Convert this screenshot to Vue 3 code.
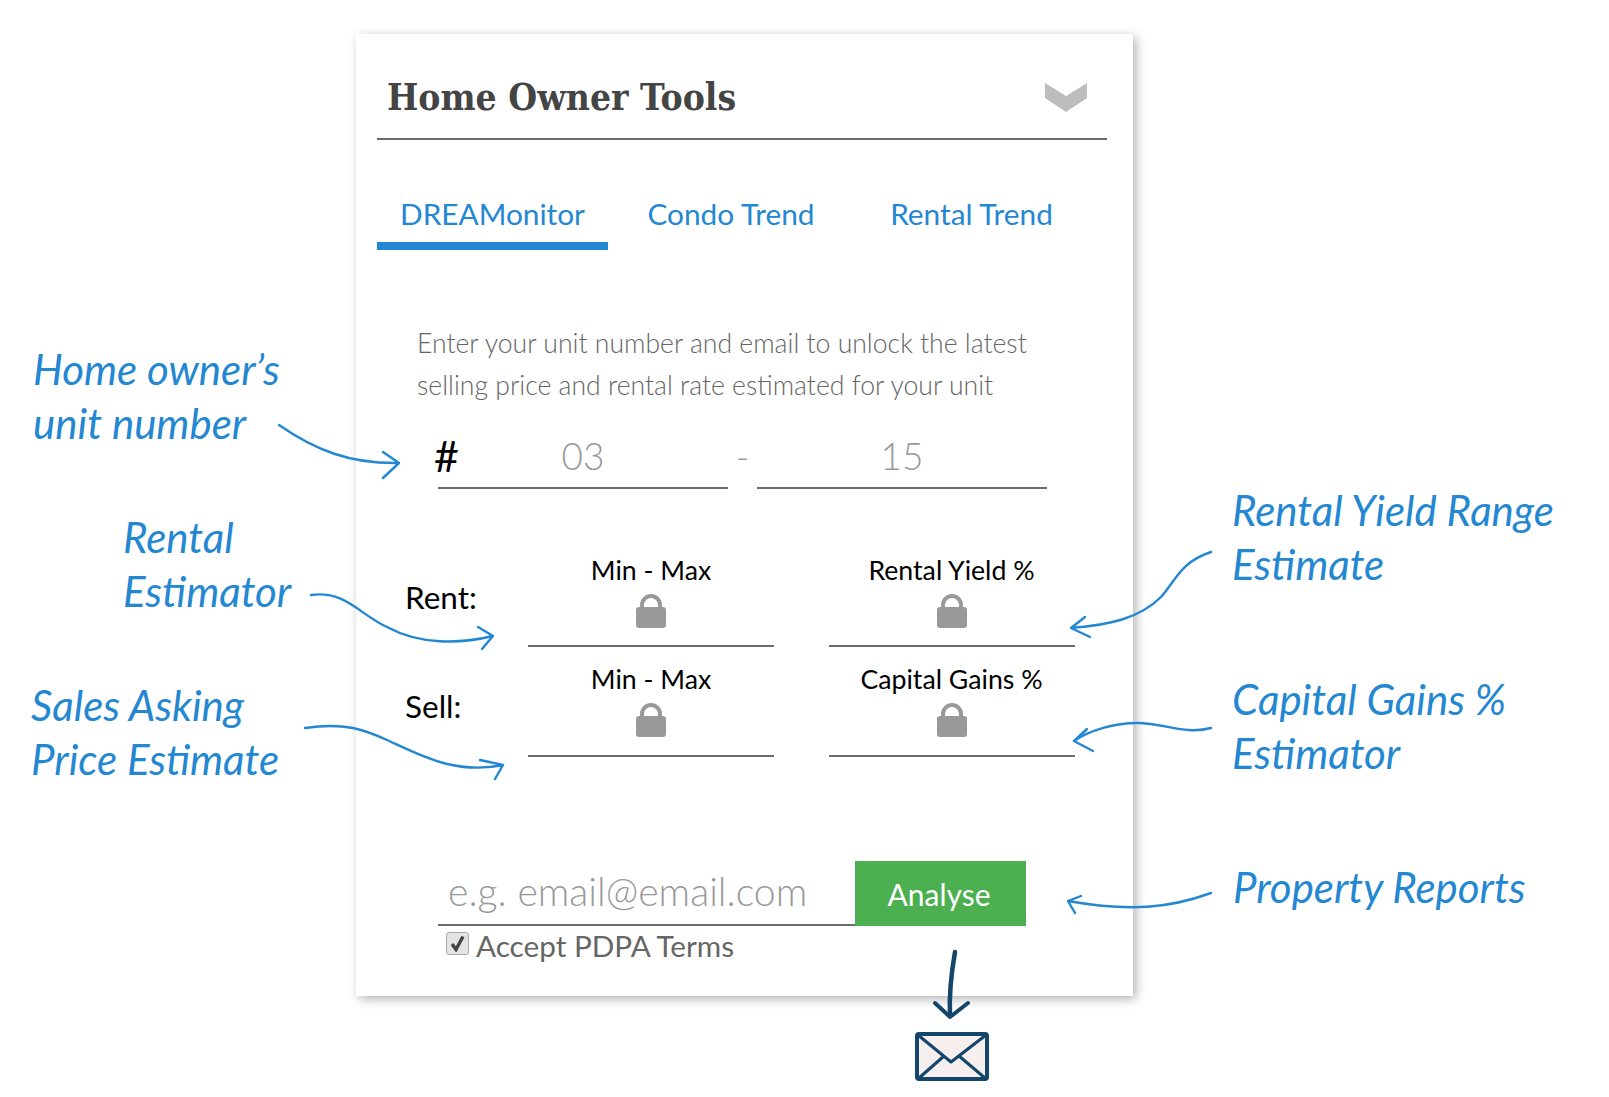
<template>
  <div class="canvas">
    <div class="card">
      <div class="card-header">
        <h2 class="title">Home Owner Tools</h2>
        <svg class="chevron" width="42" height="29" viewBox="0 0 42 29">
          <polygon points="0,0 21,13 42,0 42,15 21,29 0,15" fill="#bdbdbd" />
        </svg>
      </div>

      <div class="tabs">
        <div v-for="(tab, i) in tabs" :key="tab" class="tab" :class="{ active: i === 0 }">{{ tab }}</div>
      </div>

      <p class="intro">
        Enter your unit number and email to unlock the latest<br />
        selling price and rental rate estimated for your unit
      </p>

      <div class="unit-row">
        <div class="unit-field"><span class="hash">#</span>03</div>
        <div class="unit-sep">-</div>
        <div class="unit-field">15</div>
      </div>

      <div class="estimates">
        <template v-for="row in rows" :key="row.label">
          <div class="row-label" :class="row.cls">{{ row.label }}</div>
          <div v-for="col in row.cols" :key="col" class="estimate" :class="row.cls">
            <div class="estimate-name">{{ col }}</div>
            <svg class="lock" width="30" height="34" viewBox="0 0 30 34">
              <path d="M6 15V11a9 9 0 0 1 18 0v4" fill="none" stroke="#999" stroke-width="4" />
              <rect x="0" y="13" width="30" height="21" rx="3" fill="#999" />
            </svg>
          </div>
        </template>
      </div>

      <div class="email-row">
        <div class="email-input">e.g. email@email.com</div>
        <button class="analyse">Analyse</button>
      </div>
      <label class="terms">
        <span class="checkbox">
          <svg width="17" height="17" viewBox="0 0 17 17">
            <path d="M3 9l4 5.5L14 1.5" fill="none" stroke="#444" stroke-width="3.4" />
          </svg>
        </span>
        Accept PDPA Terms
      </label>
    </div>

    <!-- callouts around the card -->
    <div class="note note-unit">Home owner’s<br />unit number</div>
    <div class="note note-rental">Rental<br />Estimator</div>
    <div class="note note-sales">Sales Asking<br />Price Estimate</div>
    <div class="note note-yield">Rental Yield Range<br />Estimate</div>
    <div class="note note-gains">Capital Gains %<br />Estimator</div>
    <div class="note note-reports">Property Reports</div>

    <svg class="arrows" width="1609" height="1097" viewBox="0 0 1609 1097">
      <path v-for="d in arrows" :key="d" :d="d" fill="none" stroke="#2387d1" stroke-width="2.4" stroke-linecap="round" stroke-linejoin="round" />
      <g fill="none" stroke="#14456a" stroke-linecap="round" stroke-linejoin="round">
        <path d="M955 952C951 975 949 995 950 1015" stroke-width="4.5" />
        <path d="M935 1003L950 1017L968 1003" stroke-width="4" />
        <rect x="917" y="1034" width="70" height="45" rx="2" fill="#f7eeee" stroke-width="4" />
        <path d="M918 1035L951 1062L986 1035M919 1078L944 1056M985 1078L959 1056" stroke-width="3" />
      </g>
    </svg>
  </div>
</template>

<script setup>
const tabs = ["DREAMonitor", "Condo Trend", "Rental Trend"];

const rows = [
  { label: "Rent:", cls: "rent", cols: ["Min - Max", "Rental Yield %"] },
  { label: "Sell:", cls: "sell", cols: ["Min - Max", "Capital Gains %"] },
];

const arrows = [
  "M279 425C315 450 350 464 399 463M383 452L399 463L383 478",
  "M311 595C345 590 360 615 387 627C420 645 460 644 493 636M478 627L493 636L482 649",
  "M305 728C345 722 365 730 387 740C420 755 455 775 503 765M480 760L503 765L495 779",
  "M1211 552C1180 562 1175 582 1161 597C1140 618 1110 625 1071 628M1085 617L1071 628L1090 637",
  "M1211 728C1185 735 1165 723 1137 723C1115 723 1090 730 1074 741M1087 729L1074 741L1093 751",
  "M1211 893C1170 908 1130 912 1068 901M1081 896L1068 901L1075 913",
];
</script>

<style>
html,
body {
  background: #fff;
}
</style>

<style scoped>
.canvas {
  position: relative;
  width: 1609px;
  height: 1097px;
  overflow: hidden;
  padding-top: 34px;
  box-sizing: border-box;
  font-family: Lato, sans-serif;
}

.card {
  margin-left: 356px;
  width: 777px;
  height: 962px;
  box-sizing: border-box;
  padding: 0 26px 0 21px;
  background: #fff;
  box-shadow: 3px 3px 10px rgba(0, 0, 0, 0.3);
}

.card-header {
  height: 106px;
  box-sizing: border-box;
  border-bottom: 2px solid #6b6b6b;
  display: flex;
  align-items: center;
  justify-content: space-between;
  padding: 6px 20px 0 10px;
}

.title {
  margin: 16px 0 0;
  font-family: "DejaVu Serif Condensed", "DejaVu Serif", serif;
  font-stretch: condensed;
  font-weight: 700;
  font-size: 36.9px;
  color: #444;
}

.chevron {
  margin-top: 16px;
}

.tabs {
  display: grid;
  grid-template-columns: 231px 246px 235px;
  margin-top: 54px;
}

.tab {
  height: 56px;
  line-height: 40px;
  text-align: center;
  font-size: 29.8px;
  color: #2387d1;
  box-sizing: border-box;
}

.tab.active {
  border-bottom: 8px solid #2387d1;
}

.intro {
  margin: 72px 0 0 40px;
  font-weight: 300;
  font-size: 26.6px;
  line-height: 42px;
  color: #666;
  white-space: nowrap;
}

.unit-row {
  display: flex;
  margin: 24px 0 0 61px;
}

.unit-field {
  position: relative;
  width: 290px;
  height: 59px;
  line-height: 52px;
  box-sizing: border-box;
  border-bottom: 2px solid #6b6b6b;
  text-align: center;
  font-weight: 300;
  font-size: 37px;
  color: #999;
}

.hash {
  position: absolute;
  left: -4px;
  top: 0;
  font-weight: 400;
  font-size: 43px;
  color: #000;
}

.unit-sep {
  width: 29px;
  line-height: 52px;
  text-align: center;
  font-weight: 300;
  font-size: 37px;
  color: #999;
}

.estimates {
  display: grid;
  grid-template-columns: 66.5px 246px 246px;
  column-gap: 54.5px;
  row-gap: 14px;
  margin: 63px 0 0 28px;
  padding-left: 2px;
}

.row-label {
  padding-top: 27px;
  margin-left: -2px;
  font-size: 31.5px;
  line-height: 36px;
  color: #000;
}

.estimate {
  display: flex;
  flex-direction: column;
  align-items: center;
  padding-bottom: 17px;
  border-bottom: 2px solid #6b6b6b;
}

.estimate.sell {
  padding-bottom: 18px;
}

.estimate-name {
  font-size: 26.7px;
  line-height: 36px;
  color: #000;
  margin-bottom: 6px;
}

.lock {
  display: block;
}

.email-row {
  display: flex;
  margin: 104px 0 0 61px;
}

.email-input {
  width: 417px;
  height: 65px;
  box-sizing: border-box;
  padding-left: 10px;
  border-bottom: 2px solid #6b6b6b;
  line-height: 60px;
  font-weight: 300;
  font-size: 39.2px;
  color: #999;
}

.analyse {
  width: 171px;
  height: 65px;
  border: none;
  background: #4caf50;
  color: #fff;
  font-family: Lato, sans-serif;
  font-size: 30px;
  padding: 0 3px 0 0;
}

.terms {
  display: flex;
  align-items: center;
  gap: 7px;
  margin: 5px 0 0 69px;
  font-size: 29.7px;
  line-height: 30px;
  color: #666;
}

.checkbox {
  width: 23px;
  height: 23px;
  box-sizing: border-box;
  border: 1px solid #aaa;
  border-radius: 3px;
  background: #e4e4e4;
  display: flex;
  align-items: center;
  justify-content: center;
  margin-bottom: 5px;
}

.note {
  position: absolute;
  font-style: italic;
  font-size: 42px;
  line-height: 54px;
  color: #2387d1;
  white-space: nowrap;
}

.note-unit {
  left: 33px;
  top: 342px;
}

.note-rental {
  left: 123px;
  top: 510px;
}

.note-sales {
  left: 31px;
  top: 678px;
}

.note-yield {
  left: 1232px;
  top: 483px;
}

.note-gains {
  left: 1232px;
  top: 672px;
}

.note-reports {
  left: 1233px;
  top: 860px;
}

.arrows {
  position: absolute;
  left: 0;
  top: 0;
  pointer-events: none;
}
</style>
